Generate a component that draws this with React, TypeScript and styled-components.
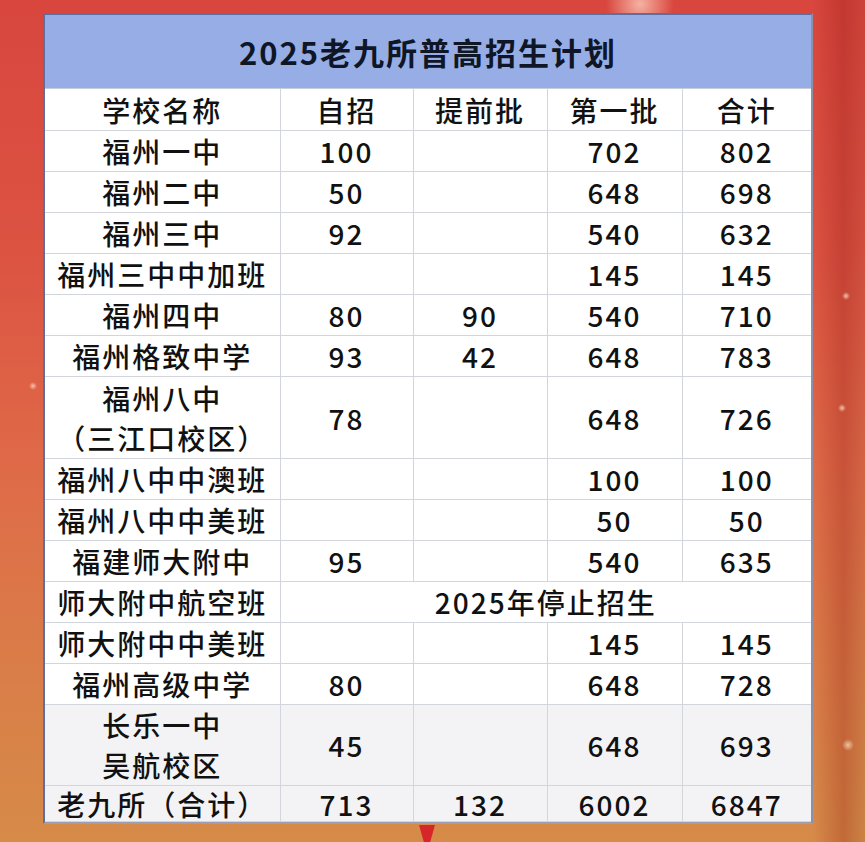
import styled, { createGlobalStyle } from "styled-components";

const GlobalStyle = createGlobalStyle`
  html, body {
    margin: 0;
    padding: 0;
  }
  body {
    width: 865px;
    height: 842px;
    overflow: hidden;
    font-family: "Noto Sans CJK SC", "Noto Sans", sans-serif;
  }
`;

const Stage = styled.div`
  width: 865px;
  height: 842px;
  box-sizing: border-box;
  padding: 13px 0 0 43px;
  display: flex;
  flex-direction: column;
  align-items: flex-start;
  background:
    radial-gradient(circle at 640px 4px, rgba(255, 214, 196, 0.75) 0, rgba(255, 214, 196, 0) 34px),
    radial-gradient(circle at 846px 296px, rgba(255, 225, 200, 0.8) 0, rgba(255, 225, 200, 0) 4px),
    radial-gradient(circle at 842px 408px, rgba(255, 225, 200, 0.8) 0, rgba(255, 225, 200, 0) 4px),
    radial-gradient(circle at 33px 386px, rgba(255, 220, 200, 0.8) 0, rgba(255, 220, 200, 0) 4px),
    radial-gradient(circle at 848px 745px, rgba(255, 235, 200, 0.7) 0, rgba(255, 235, 200, 0) 6px),
    linear-gradient(90deg, rgba(0, 0, 0, 0) 94%, rgba(140, 20, 15, 0.28) 97.5%, rgba(0, 0, 0, 0.05) 100%),
    linear-gradient(180deg, #d8463e 0%, #dc5342 30%, #df6a48 55%, #da7c48 78%, #d68b48 100%);
`;

const Board = styled.div`
  width: 770px;
  box-sizing: border-box;
  border: 2px solid #5f6e9f;
  border-right-color: #8a91aa;
  border-bottom-color: #9aa0b2;
  background: #ffffff;
`;

const Grid = styled.table`
  width: 100%;
  border-collapse: collapse;
  table-layout: fixed;
  color: #111111;
`;

const TitleCell = styled.th`
  height: 73px;
  padding: 0;
  background: #96ade6;
  color: #0f1626;
  font-size: 31px;
  font-weight: 700;
  letter-spacing: 2px;
  text-align: center;
  border-bottom: 1px solid #c9cdd8;
`;

const Row = styled.tr<{ $h: number; $shade?: boolean }>`
  height: ${(p) => p.$h}px;
  background: ${(p) => (p.$shade ? "#f3f3f5" : "#ffffff")};
`;

const Cell = styled.td`
  padding: 0;
  border: 1px solid #d3d5dc;
  text-align: center;
  vertical-align: middle;
  font-size: 28px;
  font-weight: 500;
  letter-spacing: 2px;
  line-height: 32px;
  white-space: nowrap;

  &:first-child {
    border-left: none;
  }
  &:last-child {
    border-right: none;
  }
`;

const HeadCell = styled(Cell).attrs({ as: "th" })``;

const Line = styled.div<{ $tall: boolean }>`
  line-height: ${(p) => (p.$tall ? "40px" : "32px")};
`;

const Marker = styled.div`
  margin: 1px 0 0 376px;
  width: 16px;
  height: 20px;
  background: #d6262a;
  clip-path: polygon(0 0, 100% 0, 70% 100%, 30% 100%);
`;

interface IRow {
  name: string[];
  zi?: string;
  ti?: string;
  di?: string;
  he?: string;
  note?: string;
  h?: number;
  shade?: boolean;
}

const rows: IRow[] = [
  { name: ["福州一中"], zi: "100", di: "702", he: "802" },
  { name: ["福州二中"], zi: "50", di: "648", he: "698" },
  { name: ["福州三中"], zi: "92", di: "540", he: "632" },
  { name: ["福州三中中加班"], di: "145", he: "145" },
  { name: ["福州四中"], zi: "80", ti: "90", di: "540", he: "710" },
  { name: ["福州格致中学"], zi: "93", ti: "42", di: "648", he: "783" },
  { name: ["福州八中", "（三江口校区）"], zi: "78", di: "648", he: "726", h: 82 },
  { name: ["福州八中中澳班"], di: "100", he: "100" },
  { name: ["福州八中中美班"], di: "50", he: "50" },
  { name: ["福建师大附中"], zi: "95", di: "540", he: "635" },
  { name: ["师大附中航空班"], note: "2025年停止招生" },
  { name: ["师大附中中美班"], di: "145", he: "145" },
  { name: ["福州高级中学"], zi: "80", di: "648", he: "728" },
  { name: ["长乐一中", "吴航校区"], zi: "45", di: "648", he: "693", h: 80, shade: true },
  { name: ["老九所（合计）"], zi: "713", ti: "132", di: "6002", he: "6847", h: 36, shade: true },
];

function App() {
  return (
    <>
      <GlobalStyle />
      <Stage>
        <Board>
          <Grid>
            <colgroup>
              <col style={{ width: 235 }} />
              <col style={{ width: 133 }} />
              <col style={{ width: 134 }} />
              <col style={{ width: 135 }} />
              <col />
            </colgroup>
            <thead>
              <tr>
                <TitleCell colSpan={5}>2025老九所普高招生计划</TitleCell>
              </tr>
              <Row $h={42}>
                <HeadCell>学校名称</HeadCell>
                <HeadCell>自招</HeadCell>
                <HeadCell>提前批</HeadCell>
                <HeadCell>第一批</HeadCell>
                <HeadCell>合计</HeadCell>
              </Row>
            </thead>
            <tbody>
              {rows.map((r) => (
                <Row key={r.name.join("")} $h={r.h ?? 41} $shade={r.shade}>
                  <Cell>
                    {r.name.map((line) => (
                      <Line key={line} $tall={r.name.length > 1}>
                        {line}
                      </Line>
                    ))}
                  </Cell>
                  {r.note ? (
                    <Cell colSpan={4}>{r.note}</Cell>
                  ) : (
                    <>
                      <Cell>{r.zi}</Cell>
                      <Cell>{r.ti}</Cell>
                      <Cell>{r.di}</Cell>
                      <Cell>{r.he}</Cell>
                    </>
                  )}
                </Row>
              ))}
            </tbody>
          </Grid>
        </Board>
        <Marker />
      </Stage>
    </>
  );
}

export default App;
